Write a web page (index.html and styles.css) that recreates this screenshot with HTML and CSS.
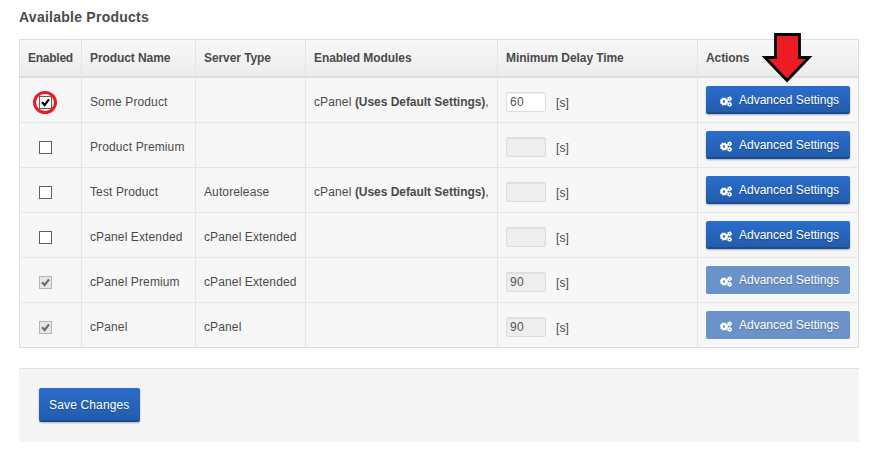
FILE: index.html
```html
<!DOCTYPE html>
<html lang="en">
<head>
    <meta charset="UTF-8">
    <meta name="viewport" content="width=device-width, initial-scale=1.0">
    <title>Available Products</title>
    <link rel="stylesheet" href="styles.css">
</head>
<body>
<svg class="defs" width="0" height="0">
    <symbol id="check" viewBox="0 0 13 13">
        <path d="M3 6.3 L5.6 9 L10 3.3" fill="none" stroke="currentColor" stroke-width="2.2"/>
    </symbol>
    <symbol id="cogs" viewBox="0 0 12 11">
        <g fill="none" stroke="currentColor">
            <circle cx="4" cy="5.5" r="2.3" stroke-width="2.2"/>
            <circle cx="4" cy="5.5" r="3.5" stroke-width="1.2" stroke-dasharray="1.5 1.25"/>
            <circle cx="9.6" cy="2.8" r="1.4" stroke-width="1.5"/>
            <circle cx="9.6" cy="8.4" r="1.4" stroke-width="1.5"/>
            <circle cx="9.6" cy="2.8" r="2.1" stroke-width=".8" stroke-dasharray="1.1 1.1"/>
            <circle cx="9.6" cy="8.4" r="2.1" stroke-width=".8" stroke-dasharray="1.1 1.1"/>
        </g>
    </symbol>
</svg>
<h1 class="title">Available Products</h1>
<form>
    <table class="products">
        <thead>
            <tr>
                <th class="col-enabled">Enabled</th>
                <th class="col-name">Product Name</th>
                <th class="col-server">Server Type</th>
                <th class="col-modules">Enabled Modules</th>
                <th class="col-delay">Minimum Delay Time</th>
                <th class="col-actions">Actions
                    <svg class="arrow" width="50" height="52" viewBox="0 0 50 52"><path d="M13.5 2.5 H37.5 V25.5 H47 L25 48.5 L3 25.5 H13.5 Z" fill="#ed1c24" stroke="#000" stroke-width="2.8"/></svg>
                </th>
            </tr>
        </thead>
        <tbody>
            <tr>
                <td><label class="check marked"><input type="checkbox" checked><svg><use href="#check"/></svg></label></td>
                <td>Some Product</td>
                <td></td>
                <td>cPanel <b>(Uses Default Settings)</b>,</td>
                <td><div class="delay"><input type="text" value="60"><span>[s]</span></div></td>
                <td><button type="button" class="btn"><svg><use href="#cogs"/></svg>Advanced Settings</button></td>
            </tr>
            <tr>
                <td><label class="check"><input type="checkbox"></label></td>
                <td>Product Premium</td>
                <td></td>
                <td></td>
                <td><div class="delay"><input type="text" disabled><span>[s]</span></div></td>
                <td><button type="button" class="btn"><svg><use href="#cogs"/></svg>Advanced Settings</button></td>
            </tr>
            <tr>
                <td><label class="check"><input type="checkbox"></label></td>
                <td>Test Product</td>
                <td>Autorelease</td>
                <td>cPanel <b>(Uses Default Settings)</b>,</td>
                <td><div class="delay"><input type="text" disabled><span>[s]</span></div></td>
                <td><button type="button" class="btn"><svg><use href="#cogs"/></svg>Advanced Settings</button></td>
            </tr>
            <tr>
                <td><label class="check"><input type="checkbox"></label></td>
                <td>cPanel Extended</td>
                <td>cPanel Extended</td>
                <td></td>
                <td><div class="delay"><input type="text" disabled><span>[s]</span></div></td>
                <td><button type="button" class="btn"><svg><use href="#cogs"/></svg>Advanced Settings</button></td>
            </tr>
            <tr>
                <td><label class="check"><input type="checkbox" checked disabled><svg><use href="#check"/></svg></label></td>
                <td>cPanel Premium</td>
                <td>cPanel Extended</td>
                <td></td>
                <td><div class="delay"><input type="text" value="90" disabled><span>[s]</span></div></td>
                <td><button type="button" class="btn" disabled><svg><use href="#cogs"/></svg>Advanced Settings</button></td>
            </tr>
            <tr>
                <td><label class="check"><input type="checkbox" checked disabled><svg><use href="#check"/></svg></label></td>
                <td>cPanel</td>
                <td>cPanel</td>
                <td></td>
                <td><div class="delay"><input type="text" value="90" disabled><span>[s]</span></div></td>
                <td><button type="button" class="btn" disabled><svg><use href="#cogs"/></svg>Advanced Settings</button></td>
            </tr>
        </tbody>
    </table>
    <div class="form-actions">
        <button type="button" class="btn btn-save">Save Changes</button>
    </div>
</form>
</body>
</html>
```
FILE: styles.css
```css
*, *::after
{
    box-sizing: border-box;
}
body
{
    margin: 0;
    padding: 7px 16px 0 19px;
    background: #fff;
    color: #4b4b4b;
    font: 12px/20px "Liberation Sans", Arial, sans-serif;
    letter-spacing: .12px;
}
.defs{
    position: absolute;
}
.title{
    margin: 0 0 12px;
    font-size: 14px;
    line-height: 20px;
    font-weight: bold;
    letter-spacing: .25px;
}
.products{
    width: 840px;
    table-layout: fixed;
    border-spacing: 0;
    border-right: 1px solid #ddd;
    background: #f7f7f7;
}
.products th{
    height: 39px;
    padding: 0 8px;
    border-top: 1px solid #ddd;
    border-bottom: 2px solid #ddd;
    border-left: 1px solid #e4e4e4;
    background: linear-gradient(#f8f8f8, #ececec);
    text-align: left;
    white-space: nowrap;
    letter-spacing: -.08px;
}
.products td{
    height: 45px;
    padding: 3px 8px 0;
    border-bottom: 1px solid #e6e6e6;
    border-left: 1px solid #e6e6e6;
    white-space: nowrap;
}
.products th:first-child, .products td:first-child{
    border-left-color: #ddd;
}
.products th:first-child{
    letter-spacing: -.25px;
}
.products tr:last-child td{
    border-bottom-color: #ddd;
}
.products b{
    letter-spacing: -.04px;
}
.col-enabled{ width: 62px; }
.col-name{ width: 114px; }
.col-server{ width: 110px; }
.col-modules{ width: 192px; }
.col-delay{ width: 200px; }
.products .col-actions{
    position: relative;
}
/* pointer over the first Advanced Settings button */
.arrow{
    position: absolute;
    left: 64px;
    top: -8px;
}
.check{
    display: block;
    position: relative;
    width: 13px;
    height: 13px;
    margin: 2px 0 0 11px;
}
.check input{
    display: block;
    appearance: none;
    width: 13px;
    height: 13px;
    margin: 0;
    border: 1px solid #5f5f5f;
    background: #fff;
}
.check input:disabled{
    border-color: #b5b5b5;
    background: #e6e6e6;
}
.check svg{
    position: absolute;
    left: 0;
    top: 0;
    width: 13px;
    height: 13px;
    color: #000;
}
.check input:disabled + svg{
    color: #6d6d6d;
}
.marked::after{
    content: "";
    position: absolute;
    left: -6px;
    top: -5px;
    width: 24px;
    height: 23px;
    border: 3px solid #ed1c24;
    border-radius: 50%;
}
.delay{
    display: flex;
    align-items: center;
    gap: 10px;
}
.delay input{
    width: 40px;
    height: 20px;
    padding: 0 3px;
    border: 1px solid #ddd;
    border-radius: 2px;
    background: #fff;
    box-shadow: inset 0 1px 1px rgba(0,0,0,.06);
    color: #555;
    font: inherit;
    letter-spacing: .3px;
}
.delay input:disabled{
    background: #eee;
}
.delay span{
    padding-top: 2px;
}
.btn{
    display: flex;
    align-items: center;
    width: 144px;
    height: 28px;
    margin-top: -4px;
    padding: 2px 0 0 14px;
    border: 0;
    border-bottom: 2px solid #1a4c94;
    border-radius: 2px;
    background: linear-gradient(#2a6dcb, #235cad);
    box-shadow: 0 1px 2px rgba(0,0,0,.3);
    color: #fff;
    font: 12px/20px "Liberation Sans", Arial, sans-serif;
    letter-spacing: 0;
    text-shadow: 0 1px 1px rgba(0,0,0,.25);
    white-space: nowrap;
}
.btn svg{
    width: 12px;
    height: 11px;
    margin: 4px 7px 0 0;
}
.btn:disabled{
    border-color: #6c93c9;
    background: #6c93c9;
    box-shadow: none;
}
.form-actions{
    width: 840px;
    height: 74px;
    margin-top: 20px;
    padding: 19px 20px;
    border-top: 1px solid #e2e2e2;
    background: #f5f5f5;
}
.btn-save{
    width: 101px;
    height: 34px;
    margin: 0;
    padding: 2px 0 0 10px;
    letter-spacing: .15px;
}
```
